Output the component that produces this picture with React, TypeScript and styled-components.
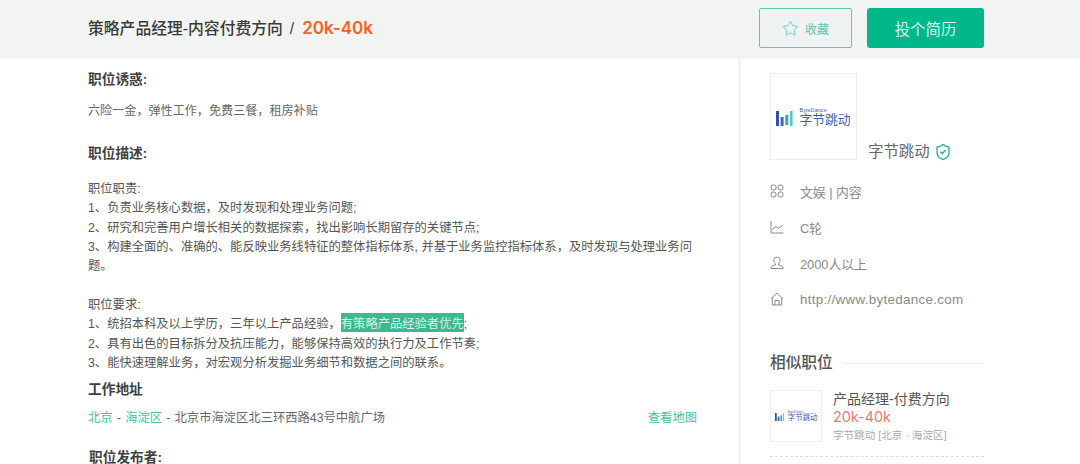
import styled, { createGlobalStyle } from "styled-components";
import { ShieldCheck, Star } from "lucide-react";

const GlobalStyle = createGlobalStyle`
  html, body {
    margin: 0;
    padding: 0;
    background: #fff;
  }
  body {
    width: 1080px;
    height: 464px;
    overflow: hidden;
    font-family: "Liberation Sans", "Noto Sans CJK SC", sans-serif;
    color: #555;
  }
`;

const Page = styled.div`
  width: 1080px;
  height: 464px;
  overflow: hidden;
`;

const Header = styled.header`
  height: 59px;
  background: #f1f4f3;
  display: flex;
  align-items: flex-start;
  justify-content: space-between;
  padding: 8px 96px 0 88px;
  box-sizing: border-box;
`;

const JobTitle = styled.h1`
  margin: 0;
  padding-top: 9px;
  font-size: 15.8px;
  line-height: 22px;
  font-weight: 500;
  color: #3a3a3a;
  white-space: nowrap;
`;

const Slash = styled.span`
  margin: 0 8px 0 7px;
`;

const Salary = styled.span`
  font-family: Inter, "Liberation Sans", sans-serif;
  color: #fd5f1f;
  font-size: 17px;
  font-weight: 600;
`;

const Actions = styled.div`
  display: flex;
  gap: 15px;
`;

const SaveButton = styled.button`
  width: 93px;
  height: 40px;
  box-sizing: border-box;
  border: 1px solid #5cc9ad;
  border-radius: 2px;
  background: #eef2f2;
  color: #5cc4aa;
  font: inherit;
  font-size: 12px;
  padding: 0;
  display: flex;
  align-items: center;
  justify-content: center;
  gap: 6px;
`;

const ApplyButton = styled.button`
  width: 117px;
  height: 40px;
  border: 0;
  border-radius: 3px;
  background: #00b88a;
  color: #d8f3ea;
  font: inherit;
  font-size: 15.4px;
  padding: 0;
`;

const Body = styled.div`
  display: flex;
  align-items: flex-start;
`;

const Main = styled.main`
  width: 738px;
  height: 405px;
  box-sizing: border-box;
  padding: 0 41px 0 88px;
`;

const SectionTitle = styled.h2<{ $top: number }>`
  margin: ${(p) => p.$top}px 0 0;
  font-size: 13.7px;
  line-height: 20px;
  font-weight: 700;
  color: #3f3f3f;
`;

const Perks = styled.p`
  margin: 11px 0 0;
  font-size: 12.1px;
  line-height: 20px;
  color: #666;
`;

const Description = styled.div`
  margin-top: 16px;
  font-size: 12.3px;
  line-height: 19.35px;
  color: #555;
`;

const Line = styled.div`
  min-height: 19.35px;
`;

const Highlight = styled.span`
  display: inline-block;
  margin-top: -4px;
  padding-top: 4px;
  line-height: 15px;
  background: #3cb98f;
  color: #d5f3e6;
`;

const Address = styled.div`
  margin-top: 8px;
  display: flex;
  justify-content: space-between;
  font-size: 12.3px;
  line-height: 20px;
  word-spacing: 0.8px;
  color: #666;
`;

const GreenText = styled.span`
  color: #46c1a3;
`;

const Publisher = styled(SectionTitle)`
  padding-left: 1px;
`;

const Side = styled.aside`
  flex: 1;
  height: 405px;
  box-sizing: border-box;
  padding: 14px 96px 0 29px;
  border-left: 3px solid #f3f3f3;
`;

const CompanyHead = styled.div`
  display: flex;
  align-items: flex-end;
  gap: 11px;
`;

const LogoBox = styled.div<{ $size: number }>`
  width: ${(p) => p.$size}px;
  height: ${(p) => p.$size}px;
  flex: none;
  box-sizing: border-box;
  border: 1px solid #eeeeee;
  display: flex;
  align-items: center;
  justify-content: center;
`;

const CompanyName = styled.div`
  display: flex;
  align-items: center;
  gap: 4px;
  margin-bottom: -1px;
  font-size: 15.4px;
  line-height: 18px;
  color: #666;
`;

const Facts = styled.ul`
  list-style: none;
  margin: 13px 0 0;
  padding: 0;
`;

const Fact = styled.li`
  height: 36px;
  display: flex;
  align-items: center;
  gap: 16px;
  font-size: 12.8px;
  color: #8a8a8a;
`;

const Url = styled.span`
  font-size: 13.4px;
  letter-spacing: 0.3px;
`;

const FactIcon = styled.svg`
  width: 14px;
  height: 14px;
  flex: none;
  fill: none;
  stroke: #8a8a8a;
  stroke-width: 1;
`;

const SimilarHead = styled.div`
  margin-top: 36px;
  display: flex;
  align-items: center;
  gap: 11px;
  font-size: 15.7px;
  line-height: 20px;
  font-weight: 500;
  color: #555;

  &::after {
    content: "";
    flex: 1;
    border-top: 1px solid #eeeeee;
  }
`;

const SimilarCard = styled.div`
  margin-top: 17px;
  padding-bottom: 14px;
  display: flex;
  gap: 11px;
  border-bottom: 1px dashed #dddddd;
`;

const SimilarInfo = styled.div`
  height: 52px;
  display: flex;
  flex-direction: column;
`;

const SimilarTitle = styled.div`
  font-size: 14px;
  line-height: 18px;
  color: #555;
`;

const SimilarSalary = styled.div`
  font-family: Inter, "Liberation Sans", sans-serif;
  font-size: 14.4px;
  line-height: 18px;
  color: #ee7a6e;
`;

const SimilarMeta = styled.div`
  font-size: 10.6px;
  line-height: 18px;
  color: #aaa;
  white-space: nowrap;
`;

const LogoWrap = styled.div<{ $scale: number }>`
  display: flex;
  align-items: flex-end;
  gap: ${(p) => 6 * p.$scale}px;
  flex: none;
`;

const LogoText = styled.div<{ $scale: number }>`
  display: flex;
  flex-direction: column;
  color: #3f5fae;
  font-size: ${(p) => 12.8 * p.$scale}px;
  line-height: ${(p) => 13 * p.$scale}px;
  white-space: nowrap;
`;

const LogoLatin = styled.span<{ $scale: number }>`
  font-size: ${(p) => 5.6 * p.$scale}px;
  line-height: ${(p) => 5 * p.$scale}px;
  color: #4a67b0;
`;

function ByteLogo({ scale }: { scale: number }) {
  return (
    <LogoWrap $scale={scale}>
      <svg width={17 * scale} height={15 * scale} viewBox="0 0 17 15">
        <rect x="0" y="0" width="3" height="15" fill="#32519f" />
        <rect x="4.6" y="6" width="3" height="9" fill="#3f69c0" />
        <rect x="9.3" y="4" width="3" height="10" fill="#35a6c4" />
        <rect x="14" y="0" width="2.6" height="15" fill="#4fd0bf" />
      </svg>
      <LogoText $scale={scale}>
        <LogoLatin $scale={scale}>ByteDance</LogoLatin>
        字节跳动
      </LogoText>
    </LogoWrap>
  );
}

export default function App() {
  return (
    <Page>
      <GlobalStyle />
      <Header>
        <JobTitle>
          策略产品经理-内容付费方向<Slash>/</Slash>
          <Salary>20k-40k</Salary>
        </JobTitle>
        <Actions>
          <SaveButton>
            <Star size={17} strokeWidth={1.1} color="#4fc0a4" />
            收藏
          </SaveButton>
          <ApplyButton>投个简历</ApplyButton>
        </Actions>
      </Header>
      <Body>
        <Main>
          <SectionTitle $top={11}>职位诱惑:</SectionTitle>
          <Perks>六险一金，弹性工作，免费三餐，租房补贴</Perks>
          <SectionTitle $top={23}>职位描述:</SectionTitle>
          <Description>
            <Line>职位职责:</Line>
            <Line>1、负责业务核心数据，及时发现和处理业务问题;</Line>
            <Line>2、研究和完善用户增长相关的数据探索，找出影响长期留存的关键节点;</Line>
            <Line>3、构建全面的、准确的、能反映业务线特征的整体指标体系, 并基于业务监控指标体系，及时发现与处理业务问题。</Line>
            <Line />
            <Line>职位要求:</Line>
            <Line>
              1、统招本科及以上学历，三年以上产品经验，<Highlight>有策略产品经验者优先</Highlight>;
            </Line>
            <Line>2、具有出色的目标拆分及抗压能力，能够保持高效的执行力及工作节奏;</Line>
            <Line>3、能快速理解业务，对宏观分析发掘业务细节和数据之间的联系。</Line>
          </Description>
          <SectionTitle $top={7}>工作地址</SectionTitle>
          <Address>
            <span>
              <GreenText>北京</GreenText> - <GreenText>海淀区</GreenText> - 北京市海淀区北三环西路43号中航广场
            </span>
            <GreenText>查看地图</GreenText>
          </Address>
          <Publisher $top={20}>职位发布者:</Publisher>
        </Main>
        <Side>
          <CompanyHead>
            <LogoBox $size={87}>
              <ByteLogo scale={1} />
            </LogoBox>
            <CompanyName>
              字节跳动
              <ShieldCheck size={18} strokeWidth={1.8} color="#27b58f" />
            </CompanyName>
          </CompanyHead>
          <Facts>
            <Fact>
              <FactIcon viewBox="0 0 14 14">
                <rect x="1" y="1" width="5" height="5" rx="2" />
                <rect x="8" y="1" width="5" height="5" rx="2" />
                <rect x="1" y="8" width="5" height="5" rx="2" />
                <rect x="8" y="8" width="5" height="5" rx="2" />
              </FactIcon>
              文娱 | 内容
            </Fact>
            <Fact>
              <FactIcon viewBox="0 0 14 14">
                <path d="M1 1v12h12.500M2.500 9.500 6 6.500l2.500 1.800L13 5" />
              </FactIcon>
              C轮
            </Fact>
            <Fact>
              <FactIcon viewBox="0 0 14 14">
                <path d="M7 1a3.200 3.200 0 0 1 3.200 3.200c0 1.600-.9 3-1.700 3.600v1.100c2 .5 4.500 1.300 4.500 2.600v1H1v-1c0-1.300 2.500-2.100 4.500-2.600V7.800C4.700 7.200 3.800 5.800 3.800 4.200A3.200 3.200 0 0 1 7 1Z" />
              </FactIcon>
              2000人以上
            </Fact>
            <Fact>
              <FactIcon viewBox="0 0 14 14">
                <path d="M.8 6.800 7 1l6.200 5.800M2.300 5.500V13h9.400V5.500M5 13V8.500h4V13" />
              </FactIcon>
              <Url>http://www.bytedance.com</Url>
            </Fact>
          </Facts>
          <SimilarHead>相似职位</SimilarHead>
          <SimilarCard>
            <LogoBox $size={52}>
              <ByteLogo scale={0.58} />
            </LogoBox>
            <SimilarInfo>
              <SimilarTitle>产品经理-付费方向</SimilarTitle>
              <SimilarSalary>20k-40k</SimilarSalary>
              <SimilarMeta>字节跳动 [北京 · 海淀区]</SimilarMeta>
            </SimilarInfo>
          </SimilarCard>
        </Side>
      </Body>
    </Page>
  );
}
